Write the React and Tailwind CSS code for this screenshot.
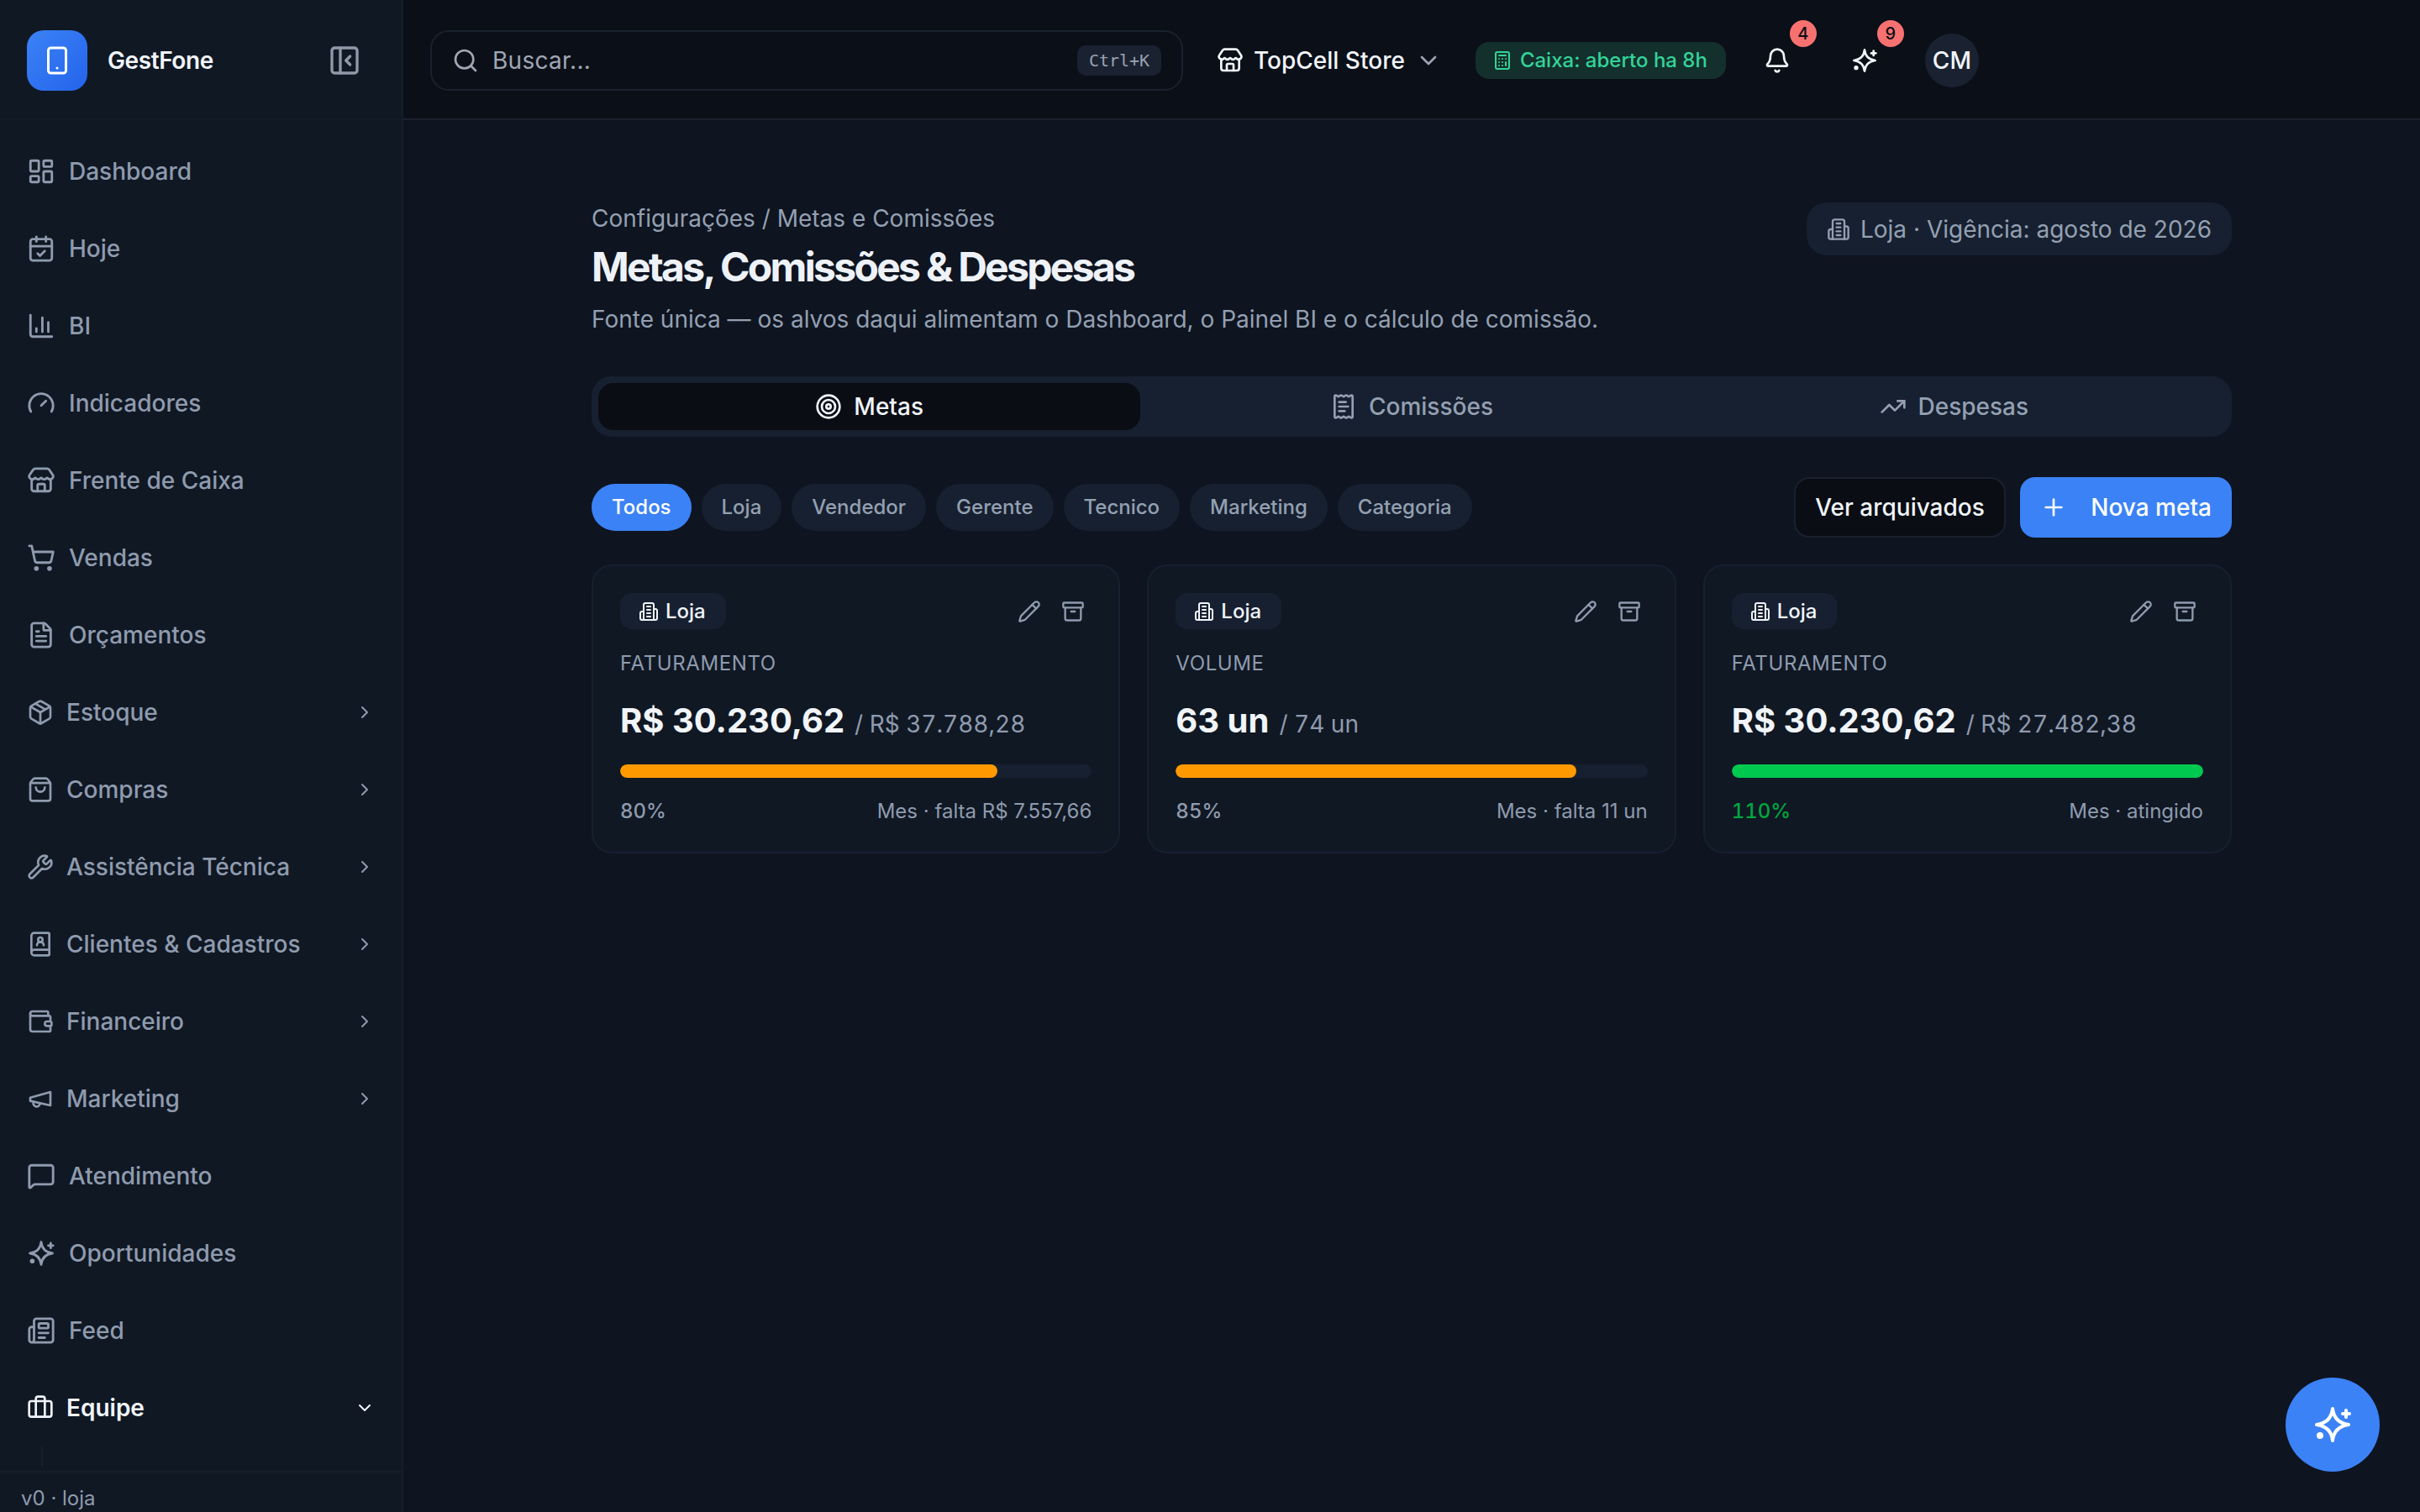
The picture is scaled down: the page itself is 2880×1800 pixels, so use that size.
import React from "react";
import {
  Archive, Bell, BookUser, Briefcase, Calculator, CalendarCheck, ChartColumn, ChevronDown, ChevronRight,
  FileText, Gauge, LayoutDashboard, MessageSquare, Newspaper, Package, PanelLeftClose, Pencil, Plus,
  ReceiptText, Search, ShoppingBag, ShoppingCart, Smartphone, Store, Target, TrendingUp, Wallet, Wrench,
} from "lucide-react";

// four point star with a plus and a dot, the lucide one is not symmetric enough
const Spark = ({ size = 32, className = "" }) => (
  <svg width={size} height={size} viewBox="0 0 24 24" fill="none" stroke="currentColor" strokeWidth="2" strokeLinecap="round" strokeLinejoin="round" className={className}>
    <path d="M12 2.5C12.6 8 15.8 11.2 21.5 12C15.8 12.8 12.6 16 12 21.5C11.4 16 8.2 12.8 2.5 12C8.2 11.2 11.4 8 12 2.5Z" />
    <path d="M20 3.5v4" />
    <path d="M22 5.5h-4" />
    <circle cx="4.5" cy="18.5" r="1" fill="currentColor" />
  </svg>
);

const Megaphone = ({ size = 32, className = "" }) => (
  <svg width={size} height={size} viewBox="0 0 24 24" fill="none" stroke="currentColor" strokeWidth="2" strokeLinecap="round" strokeLinejoin="round" className={className}>
    <path d="m3 11 18-5v12L3 14v-3z" />
    <path d="M11.6 16.8a3 3 0 1 1-5.8-1.6" />
  </svg>
);

const Building = ({ size = 24, className = "" }) => (
  <svg width={size} height={size} viewBox="0 0 24 24" fill="none" stroke="currentColor" strokeWidth="2" strokeLinecap="round" strokeLinejoin="round" className={className}>
    <path d="M6 22V4a2 2 0 0 1 2-2h8a2 2 0 0 1 2 2v18Z" />
    <path d="M6 12H4a2 2 0 0 0-2 2v6a2 2 0 0 0 2 2h2" />
    <path d="M18 9h2a2 2 0 0 1 2 2v9a2 2 0 0 1-2 2h-2" />
    <path d="M10 6h4" />
    <path d="M10 10h4" />
    <path d="M10 14h4" />
    <path d="M10 18h4" />
  </svg>
);

const NAV = [
  { label: "Dashboard", icon: LayoutDashboard },
  { label: "Hoje", icon: CalendarCheck },
  { label: "BI", icon: ChartColumn },
  { label: "Indicadores", icon: Gauge },
  { label: "Frente de Caixa", icon: Store },
  { label: "Vendas", icon: ShoppingCart },
  { label: "Orçamentos", icon: FileText },
  { label: "Estoque", icon: Package, group: true },
  { label: "Compras", icon: ShoppingBag, group: true },
  { label: "Assistência Técnica", icon: Wrench, group: true },
  { label: "Clientes & Cadastros", icon: BookUser, group: true },
  { label: "Financeiro", icon: Wallet, group: true },
  { label: "Marketing", icon: Megaphone, group: true },
  { label: "Atendimento", icon: MessageSquare },
  { label: "Oportunidades", icon: Spark },
  { label: "Feed", icon: Newspaper },
];

const FILTERS = ["Loja", "Vendedor", "Gerente", "Tecnico", "Marketing", "Categoria"];

const CARDS = [
  { label: "FATURAMENTO", value: "R$ 30.230,62", target: "/ R$ 37.788,28", pct: 80, note: "Mes · falta R$ 7.557,66" },
  { label: "VOLUME", value: "63 un", target: "/ 74 un", pct: 85, note: "Mes · falta 11 un" },
  { label: "FATURAMENTO", value: "R$ 30.230,62", target: "/ R$ 27.482,38", pct: 110, note: "Mes · atingido", done: true },
];

const Sidebar = () => (
  <aside className="w-[480px] shrink-0 h-full flex flex-col bg-[#101824] border-r-2 border-[#161e2b]">
    <div className="h-[143px] shrink-0 flex items-center pt-[2px] pl-8 pr-[48px] border-b-2 border-[#131b28]">
      <div className="w-[72px] h-[72px] rounded-[20px] bg-gradient-to-br from-[#3b82f6] to-[#2563eb] flex items-center justify-center">
        <Smartphone size={36} color="#ffffff" />
      </div>
      <span className="ml-6 text-[28px] font-semibold tracking-[-0.015em] text-[#f1f5f9]">GestFone</span>
      <PanelLeftClose size={40} className="ml-auto text-[#8f99a8]" />
    </div>
    <nav className="flex-1 overflow-hidden pt-[15px]">
      {NAV.map((item) => (
        <div key={item.label} className="h-[92px] flex items-center pl-8 pr-8 text-[#8f9bae]">
          <item.icon size={item.group ? 32 : 34} strokeWidth={2} className="shrink-0" />
          <span className={`text-[28px] font-medium ${item.group ? "ml-[15px]" : "ml-4"}`}>{item.label}</span>
          {item.group && <ChevronRight size={24} className="ml-auto" />}
        </div>
      ))}
      <div className="h-[92px] flex items-center pl-8 pr-8 text-[#f1f5f9]">
        <Briefcase size={32} className="shrink-0" />
        <span className="ml-[15px] text-[28px] font-semibold">Equipe</span>
        <ChevronDown size={24} className="ml-auto" />
      </div>
      <div className="ml-[49px] h-[24px] border-l-2 border-[#172030]" />
    </nav>
    <div className="h-[49px] shrink-0 border-t-2 border-[#161e2b] pl-[25px] pt-[13px] text-[24px] leading-[36px] text-[#8f9bae]">
      v0 · loja
    </div>
  </aside>
);

const Badge = ({ children }) => (
  <span className="absolute -top-[32px] left-[31px] w-8 h-8 rounded-full bg-[#f87171] flex items-center justify-center text-[20px] font-medium text-[#0a0d14]">
    {children}
  </span>
);

const Header = () => (
  <header className="h-[143px] shrink-0 flex items-center pt-[2px] pl-8 bg-[#0b0f18] border-b-2 border-[#1a212e]">
    <div className="w-[896px] h-[72px] shrink-0 flex items-center pl-6 pr-6 rounded-[22px] border-2 border-[#1a212e] bg-[#0b0f18]">
      <Search size={32} className="text-[#a0a7b4]" />
      <span className="ml-4 text-[28px] tracking-[0.01em] text-[#a0a7b4]">Buscar...</span>
      <span className="ml-auto h-[36px] w-[100px] flex items-center justify-center rounded-[10px] bg-[#1a2231] font-['DejaVu_Sans_Mono','Liberation_Mono',monospace] text-[20px] text-[#9aa3b1]">
        Ctrl+K
      </span>
    </div>
    <div className="ml-10 flex items-center text-[#f1f5f9]">
      <Store size={32} />
      <span className="ml-3 text-[28px] font-medium">TopCell Store</span>
      <ChevronDown size={32} className="ml-3 text-[#9aa3b1]" />
    </div>
    <div className="ml-10 h-[44px] flex items-center pl-5 pr-[22px] rounded-[16px] bg-[#13302c] text-[#34d399]">
      <Calculator size={24} />
      <span className="ml-[9px] text-[24px] font-medium">Caixa: aberto ha 8h</span>
    </div>
    <div className="relative ml-[45px] text-[#f1f5f9]">
      <Bell size={32} className="block" />
      <Badge>4</Badge>
    </div>
    <div className="relative ml-[72px] text-[#f1f5f9]">
      <Spark size={32} className="block" />
      <Badge>9</Badge>
    </div>
    <div className="ml-[56px] w-16 h-16 rounded-full bg-[#1a2231] flex items-center justify-center text-[28px] font-medium text-[#f1f5f9]">
      CM
    </div>
  </header>
);

const GoalCard = ({ card }) => (
  <div className="h-[344px] rounded-[24px] border-2 border-[#172030] bg-[#101824] p-8">
    <div className="flex items-center justify-between">
      <span className="h-[43px] flex items-center gap-2 pl-[22px] pr-6 rounded-[14px] bg-[#172030] text-[24px] font-medium text-[#f1f5f9]">
        <Building size={24} />
        Loja
      </span>
      <div className="flex items-center gap-6 pr-2 text-[#8f9bae]">
        <Pencil size={28} />
        <Archive size={28} />
      </div>
    </div>
    <p className="mt-[23px] text-[24px] leading-9 tracking-[0.025em] text-[#8f9bae]">{card.label}</p>
    <div className="mt-[22px] flex items-baseline gap-3 leading-[56px]">
      <span className="text-[40px] font-bold text-[#f1f5f9]">{card.value}</span>
      <span className="text-[28px] tabular-nums text-[#8f9bae]">{card.target}</span>
    </div>
    <div className="mt-5 h-4 rounded-full bg-[#172030] overflow-hidden">
      <div className={`h-full rounded-full ${card.done ? "bg-[#00c950]" : "bg-[#fe9a00]"}`} style={{ width: `${Math.min(card.pct, 100)}%` }} />
    </div>
    <div className="mt-[22px] flex items-center justify-between text-[24px] leading-9">
      <span className={`font-medium tabular-nums ${card.done ? "text-[#00a63e]" : "text-[#8f9bae]"}`}>{card.pct}%</span>
      <span className="text-[#8f9bae]">{card.note}</span>
    </div>
  </div>
);

const App = () => (
  <div className="relative h-screen w-full overflow-hidden flex bg-[#0e1420] font-['Inter','Liberation_Sans',sans-serif]">
    <Sidebar />
    <div className="flex-1 min-w-0 flex flex-col">
      <Header />
      <main className="flex-1 w-[1952px] mx-auto pt-[98px]">
        <div className="flex items-start justify-between">
          <div>
            <p className="text-[28px] leading-[38px] text-[#94a0b2]">Configurações / Metas e Comissões</p>
            <h1 className="mt-[9px] text-[48px] leading-[60px] font-bold tracking-[-0.056em] text-[#eef2f8]">Metas, Comissões &amp; Despesas</h1>
            <p className="mt-[11px] text-[28px] leading-[42px] text-[#94a0b2]">
              Fonte única — os alvos daqui alimentam o Dashboard, o Painel BI e o cálculo de comissão.
            </p>
          </div>
          <div className="h-[63px] flex items-center gap-3 px-6 rounded-[24px] bg-[#172030] text-[28px] text-[#94a0b2]">
            <Building size={28} />
            Loja · Vigência: agosto de 2026
          </div>
        </div>

        <div className="mt-[47px] h-[72px] grid grid-cols-3 p-2 rounded-[24px] bg-[#172030] text-[28px] font-medium">
          <div className="flex items-center justify-center gap-[14px] rounded-[18px] bg-[#0a0d14] text-[#f1f5f9]">
            <Target size={32} />
            Metas
          </div>
          <div className="flex items-center justify-center gap-[14px] text-[#94a0b2]">
            <ReceiptText size={32} />
            Comissões
          </div>
          <div className="flex items-center justify-center gap-[14px] text-[#94a0b2]">
            <TrendingUp size={32} />
            Despesas
          </div>
        </div>

        <div className="mt-12 h-[72px] flex items-center">
          <div className="flex items-center gap-3 text-[24px] font-medium">
            <span className="h-14 flex items-center px-6 rounded-full bg-[#3b82f6] text-white">Todos</span>
            {FILTERS.map((f) => (
              <span key={f} className="h-14 flex items-center px-6 rounded-full bg-[#172030] text-[#94a0b2]">{f}</span>
            ))}
          </div>
          <button className="ml-auto h-[72px] w-[252px] rounded-[18px] border-2 border-[#1a212e] bg-[#0a0d14] text-[28px] font-medium text-[#f1f5f9]">
            Ver arquivados
          </button>
          <button className="ml-[17px] h-[72px] w-[252px] flex items-center justify-between px-6 rounded-[18px] bg-[#3b82f6] text-[28px] font-medium text-white">
            <Plus size={32} />
            Nova meta
          </button>
        </div>

        <div className="mt-8 grid grid-cols-3 gap-8">
          {CARDS.map((c, i) => <GoalCard key={i} card={c} />)}
        </div>
      </main>
    </div>
    <button className="absolute right-12 bottom-12 w-28 h-28 rounded-full bg-[#3b82f6] flex items-center justify-center text-white">
      <Spark size={48} />
    </button>
  </div>
);

export default App;
